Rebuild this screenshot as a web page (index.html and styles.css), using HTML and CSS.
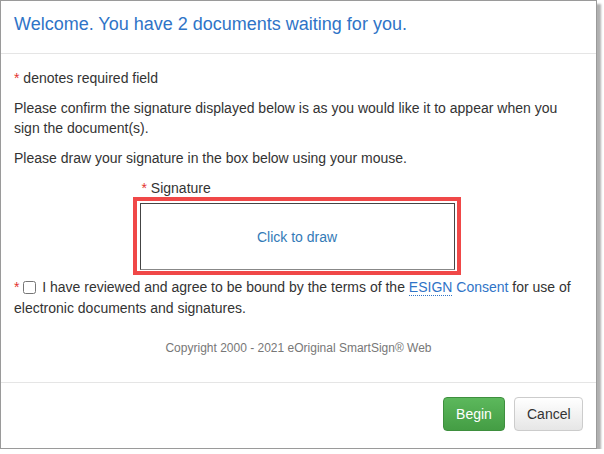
FILE: index.html
```html
<!DOCTYPE html>
<html lang="en">
<head>
  <meta charset="UTF-8" />
  <title>Welcome</title>
  <link rel="stylesheet" href="styles.css">
</head>
<body>
  <div class="panel">
    <header class="panel-head">
      <h1>Welcome. You have 2 documents waiting for you.</h1>
    </header>

    <main class="panel-body">
      <p><span class="req">*</span> denotes required field</p>
      <p>Please confirm the signature displayed below is as you would like it to appear when you sign the document(s).</p>
      <p>Please draw your signature in the box below using your mouse.</p>

      <div class="sig">
        <label class="sig-label"><span class="req">*</span> Signature</label>
        <div class="sig-frame">
          <div class="sig-box">Click to draw</div>
        </div>
      </div>

      <p class="agree">
        <span class="req">*</span>
        <input type="checkbox" class="check" />
        I have reviewed and agree to be bound by the terms of the <a href="#"><span class="esign">ESIGN</span> Consent</a> for use of electronic documents and signatures.
      </p>

      <p class="copy">Copyright 2000 - 2021 eOriginal SmartSign® Web</p>
    </main>

    <footer class="panel-foot">
      <button class="btn btn-begin">Begin</button>
      <button class="btn btn-cancel">Cancel</button>
    </footer>
  </div>
</body>
</html>
```

FILE: styles.css
```css
body { margin: 0; font-family: "Liberation Sans", Arial, sans-serif; font-size: 14px; color: #333; background: #fff; }
.panel { width: 595px; height: 447px; border: 1px solid #9a9a9a; box-shadow: 4px 4px 2px #b0b0b0; background: #fff; display: flex; flex-direction: column; }
.panel-head { padding: 8px 13px 14px; border-bottom: 1px solid #e5e5e5; }
.panel-head h1 { margin: 0; font-size: 18px; font-weight: normal; line-height: 30px; color: #2f74c7; }
.panel-body { padding: 14px 13px 0; flex: 1; }
.panel-body p { margin: 0 0 10px; line-height: 20px; }
.req { color: #e3342f; }
.sig { width: 328px; margin: 11px auto 0; position: relative; left: -2px; }
.sig-label { display: block; padding-left: 9px; line-height: 18px; margin-bottom: 0; }
.sig-frame { border: 4px solid #f04848; padding: 2px 2px 1px 3px; }
.sig-box { height: 65px; border: 1px solid #444; border-bottom-color: #888; display: flex; align-items: center; justify-content: center; color: #337ab7; }
.panel-body .agree { margin-top: 2px; line-height: 21px; }
.check { width: 13px; height: 13px; margin: 0 2px 0 0; vertical-align: -2px; }
a { color: #2f74c7; text-decoration: none; }
.esign { border-bottom: 1px dotted #2f74c7; }
.panel-body .copy { text-align: center; font-size: 12px; color: #777; margin-top: 19px; }
.panel-foot { border-top: 1px solid #e5e5e5; padding: 14px 13px 17px; display: flex; justify-content: flex-end; gap: 9px; }
.btn { font-family: inherit; font-size: 14px; padding: 0 12px; height: 34px; border-radius: 4px; cursor: pointer; }
.btn-begin { background: linear-gradient(#5cb85c, #449d44); border: 1px solid #3e8f3e; color: #fff; width: 62px; }
.btn-cancel { background: linear-gradient(#fff, #e6e6e6); border: 1px solid #ccc; color: #333; width: 69px; }
```
